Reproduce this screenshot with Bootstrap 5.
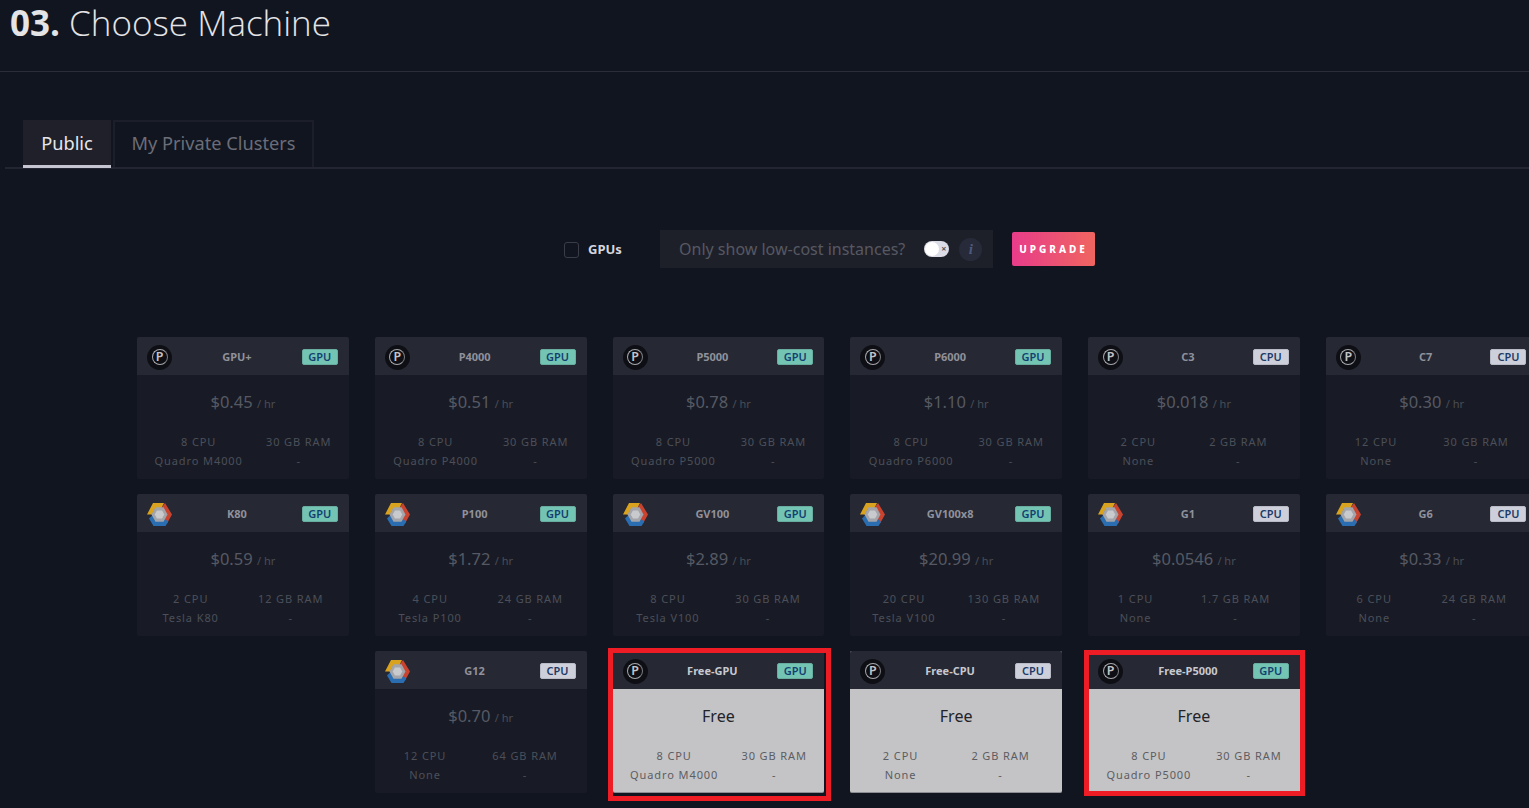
<!DOCTYPE html>
<html lang="en">
<head>
<meta charset="utf-8">
<title>Choose Machine</title>
<link href="https://cdn.jsdelivr.net/npm/bootstrap@5.3.0/dist/css/bootstrap.min.css" rel="stylesheet">
<style>
html,body{height:808px;overflow:hidden}
body{background:#11151f;font-family:"Noto Sans","Open Sans",sans-serif;color:#e4e4e6}
.page-head{height:72px;border-bottom:1px solid #2b2e39;padding:0 0 0 10px}
.page-head h1{font-size:35px;line-height:45px;font-weight:300;margin:0;color:#e4e4e6;font-family:"Open Sans","Noto Sans",sans-serif}
.page-head b{font-weight:700}
.tabs-wrap{margin:48px 0 0 5px;padding-left:18px;border-bottom:2px solid #232632;height:49px;align-items:flex-end}
.tab-item{height:47px;line-height:46px;font-size:18.2px;text-align:center;text-decoration:none}
.tab-on{width:88px;background:#1f2029;color:#e6e6ea;border-bottom:3px solid #c5c5d2;margin-right:2px;margin-bottom:-1px;height:48px}
.tab-off{width:201px;color:#6b6d78;border:2px solid #1c1f2a;border-bottom:0;line-height:42px}
.tool-row{margin-top:61px;padding-left:130px;height:38px}
.chk{width:15px;height:16px;border:1px solid #3a3d47;border-radius:3px;background:transparent;margin:1px 9px 0 0}
.chk-label{font-size:13px;font-weight:700;color:#d5d6de;margin-right:38px;width:34px;white-space:nowrap;padding-top:2px}
.low-box{width:333px;height:38px;background:#1e2029;padding-left:19px;font-size:16px;color:#565862;margin-right:19px}
.switcher{width:25px;height:16px;border-radius:8px;background:#dcdce6;margin-left:19px;position:relative;flex:none}
.switcher::before{content:"";position:absolute;left:1px;top:1px;width:14px;height:14px;border-radius:50%;background:#fff}
.switcher::after{content:"×";position:absolute;right:3px;top:0;font-size:9px;line-height:15px;font-weight:700;color:#555}
.info-dot{width:23px;height:23px;border-radius:50%;background:#272a39;margin-left:10px;font-family:"Liberation Serif",serif;font-style:italic;font-weight:700;font-size:15px;line-height:23px;text-align:center;color:#4d5a7f;flex:none}
.up-btn{width:83px;height:34px;border-radius:2px;background:linear-gradient(90deg,#e83c8a,#ef6560);font-size:10px;font-weight:800;letter-spacing:3px;color:#fff;line-height:34px;text-align:center}
.machines{display:grid;grid-template-columns:repeat(6,211.75px);column-gap:26px;row-gap:15px;margin:69px 0 0 137px;width:1400px}
.mcard{height:142px;background:#181b25;border-radius:2px;position:relative}
.mhead{height:38px;background:#262833;padding:2px 11px 0 10px;border-radius:2px 2px 0 0}
.mhead svg{display:block;flex:none}
.plogo{width:25px;height:25px;border-radius:50%;background:#0e0f15;flex:none;position:relative;font-size:12.5px;font-weight:600;line-height:24px;text-align:center;color:#c4c4c8}
.plogo::before{content:"";position:absolute;inset:4.5px;border-radius:50%;border:1.4px solid #a8a8ac;border-right-color:#7d7d82}
.mtitle{font-size:11px;font-weight:700;color:#90919a}
.tag{font-size:11px;line-height:14px;height:16px;width:36px;font-weight:600;text-align:center;border-radius:2px;color:#123f70;border:1px solid transparent}
.tag-g{background:#74c4b4;border-color:#68ad9f}
.tag-c{background:#cdd0da;border-color:#b9bbc6;color:#1d3a66}
.mprice{font-size:16.5px;line-height:24px;color:#565963;text-align:center;padding-top:15px;height:57px}
.mprice small{font-size:11px;color:#4a4d57}
.mspec{display:grid;grid-template-columns:auto auto;width:200px;margin:0 0 0 6px;font-size:11px;letter-spacing:.9px;color:#4c4f59;text-align:center;line-height:19px}
.mspec span{white-space:nowrap}
.mcard-free{background:#c4c4c6;border-bottom:1px solid #8c8d92}
.mcard-free .mtitle{color:#c8c9cf}
.mcard-free .mprice{color:#222328;font-size:16px}
.mcard-free .mspec{color:#5c5d62}
.red-mark{position:absolute;left:-5px;right:-7px;top:-3px;bottom:-9px;border:5px solid #ee1c25;pointer-events:none}
.red-mark-b{left:-4px;right:-5px;top:-1px;bottom:-4px}
</style>
</head>
<body>
<svg width="0" height="0" class="d-block">
<symbol id="glogo" viewBox="0 0 25 23">
<polygon points="6,0 17,0 14.5,5 8.5,5 5,11.5 0,11.5" fill="#d9a31f"/>
<polygon points="18,0 25,11.5 20,20.5 16,16.5 19.5,11.5 15,4" fill="#c9432f"/>
<polygon points="2,15.5 6,11.5 9,17 19,16.5 21,19 18.5,23 6.5,23" fill="#2a6db0"/>
<polygon points="8.5,4.2 16.5,4.2 20.5,11.5 16.5,18.8 8.5,18.8 4.5,11.5" fill="#a3a5aa"/>
<polygon points="10,7.5 15,7.5 17.3,11.5 15,15.5 10,15.5 7.7,11.5" fill="#c9cacd"/>
</symbol>
</svg>

<div class="page-head"><h1><b>03.</b> Choose Machine</h1></div>

<div class="tabs-wrap d-flex">
  <a class="tab-item tab-on" href="#">Public</a>
  <a class="tab-item tab-off" href="#">My Private Clusters</a>
</div>

<div class="tool-row d-flex justify-content-center align-items-center">
  <span class="chk"></span><span class="chk-label">GPUs</span>
  <div class="low-box d-flex align-items-center"><span>Only show low-cost instances?</span><span class="switcher"></span><span class="info-dot">i</span></div>
  <div class="up-btn">UPGRADE</div>
</div>

<div class="machines">
  <div class="mcard"><div class="mhead d-flex justify-content-between align-items-center"><span class="plogo">P</span><span class="mtitle">GPU+</span><span class="tag tag-g">GPU</span></div><div class="mprice">$0.45 <small>/ hr</small></div><div class="mspec"><span>8 CPU</span><span>30 GB RAM</span><span>Quadro M4000</span><span>-</span></div></div>
  <div class="mcard"><div class="mhead d-flex justify-content-between align-items-center"><span class="plogo">P</span><span class="mtitle">P4000</span><span class="tag tag-g">GPU</span></div><div class="mprice">$0.51 <small>/ hr</small></div><div class="mspec"><span>8 CPU</span><span>30 GB RAM</span><span>Quadro P4000</span><span>-</span></div></div>
  <div class="mcard"><div class="mhead d-flex justify-content-between align-items-center"><span class="plogo">P</span><span class="mtitle">P5000</span><span class="tag tag-g">GPU</span></div><div class="mprice">$0.78 <small>/ hr</small></div><div class="mspec"><span>8 CPU</span><span>30 GB RAM</span><span>Quadro P5000</span><span>-</span></div></div>
  <div class="mcard"><div class="mhead d-flex justify-content-between align-items-center"><span class="plogo">P</span><span class="mtitle">P6000</span><span class="tag tag-g">GPU</span></div><div class="mprice">$1.10 <small>/ hr</small></div><div class="mspec"><span>8 CPU</span><span>30 GB RAM</span><span>Quadro P6000</span><span>-</span></div></div>
  <div class="mcard"><div class="mhead d-flex justify-content-between align-items-center"><span class="plogo">P</span><span class="mtitle">C3</span><span class="tag tag-c">CPU</span></div><div class="mprice">$0.018 <small>/ hr</small></div><div class="mspec"><span>2 CPU</span><span>2 GB RAM</span><span>None</span><span>-</span></div></div>
  <div class="mcard"><div class="mhead d-flex justify-content-between align-items-center"><span class="plogo">P</span><span class="mtitle">C7</span><span class="tag tag-c">CPU</span></div><div class="mprice">$0.30 <small>/ hr</small></div><div class="mspec"><span>12 CPU</span><span>30 GB RAM</span><span>None</span><span>-</span></div></div>

  <div class="mcard"><div class="mhead d-flex justify-content-between align-items-center"><svg width="25" height="23"><use href="#glogo"/></svg><span class="mtitle">K80</span><span class="tag tag-g">GPU</span></div><div class="mprice">$0.59 <small>/ hr</small></div><div class="mspec"><span>2 CPU</span><span>12 GB RAM</span><span>Tesla K80</span><span>-</span></div></div>
  <div class="mcard"><div class="mhead d-flex justify-content-between align-items-center"><svg width="25" height="23"><use href="#glogo"/></svg><span class="mtitle">P100</span><span class="tag tag-g">GPU</span></div><div class="mprice">$1.72 <small>/ hr</small></div><div class="mspec"><span>4 CPU</span><span>24 GB RAM</span><span>Tesla P100</span><span>-</span></div></div>
  <div class="mcard"><div class="mhead d-flex justify-content-between align-items-center"><svg width="25" height="23"><use href="#glogo"/></svg><span class="mtitle">GV100</span><span class="tag tag-g">GPU</span></div><div class="mprice">$2.89 <small>/ hr</small></div><div class="mspec"><span>8 CPU</span><span>30 GB RAM</span><span>Tesla V100</span><span>-</span></div></div>
  <div class="mcard"><div class="mhead d-flex justify-content-between align-items-center"><svg width="25" height="23"><use href="#glogo"/></svg><span class="mtitle">GV100x8</span><span class="tag tag-g">GPU</span></div><div class="mprice">$20.99 <small>/ hr</small></div><div class="mspec"><span>20 CPU</span><span>130 GB RAM</span><span>Tesla V100</span><span>-</span></div></div>
  <div class="mcard"><div class="mhead d-flex justify-content-between align-items-center"><svg width="25" height="23"><use href="#glogo"/></svg><span class="mtitle">G1</span><span class="tag tag-c">CPU</span></div><div class="mprice">$0.0546 <small>/ hr</small></div><div class="mspec"><span>1 CPU</span><span>1.7 GB RAM</span><span>None</span><span>-</span></div></div>
  <div class="mcard"><div class="mhead d-flex justify-content-between align-items-center"><svg width="25" height="23"><use href="#glogo"/></svg><span class="mtitle">G6</span><span class="tag tag-c">CPU</span></div><div class="mprice">$0.33 <small>/ hr</small></div><div class="mspec"><span>6 CPU</span><span>24 GB RAM</span><span>None</span><span>-</span></div></div>

  <div></div>
  <div class="mcard"><div class="mhead d-flex justify-content-between align-items-center"><svg width="25" height="23"><use href="#glogo"/></svg><span class="mtitle">G12</span><span class="tag tag-c">CPU</span></div><div class="mprice">$0.70 <small>/ hr</small></div><div class="mspec"><span>12 CPU</span><span>64 GB RAM</span><span>None</span><span>-</span></div></div>
  <div class="mcard mcard-free"><div class="mhead d-flex justify-content-between align-items-center"><span class="plogo">P</span><span class="mtitle">Free-GPU</span><span class="tag tag-g">GPU</span></div><div class="mprice">Free</div><div class="mspec"><span>8 CPU</span><span>30 GB RAM</span><span>Quadro M4000</span><span>-</span></div><span class="red-mark"></span></div>
  <div class="mcard mcard-free"><div class="mhead d-flex justify-content-between align-items-center"><span class="plogo">P</span><span class="mtitle">Free-CPU</span><span class="tag tag-c">CPU</span></div><div class="mprice">Free</div><div class="mspec"><span>2 CPU</span><span>2 GB RAM</span><span>None</span><span>-</span></div></div>
  <div class="mcard mcard-free"><div class="mhead d-flex justify-content-between align-items-center"><span class="plogo">P</span><span class="mtitle">Free-P5000</span><span class="tag tag-g">GPU</span></div><div class="mprice">Free</div><div class="mspec"><span>8 CPU</span><span>30 GB RAM</span><span>Quadro P5000</span><span>-</span></div><span class="red-mark red-mark-b"></span></div>
</div>
<script src="https://cdn.jsdelivr.net/npm/bootstrap@5.3.0/dist/js/bootstrap.bundle.min.js"></script>
</body>
</html>
